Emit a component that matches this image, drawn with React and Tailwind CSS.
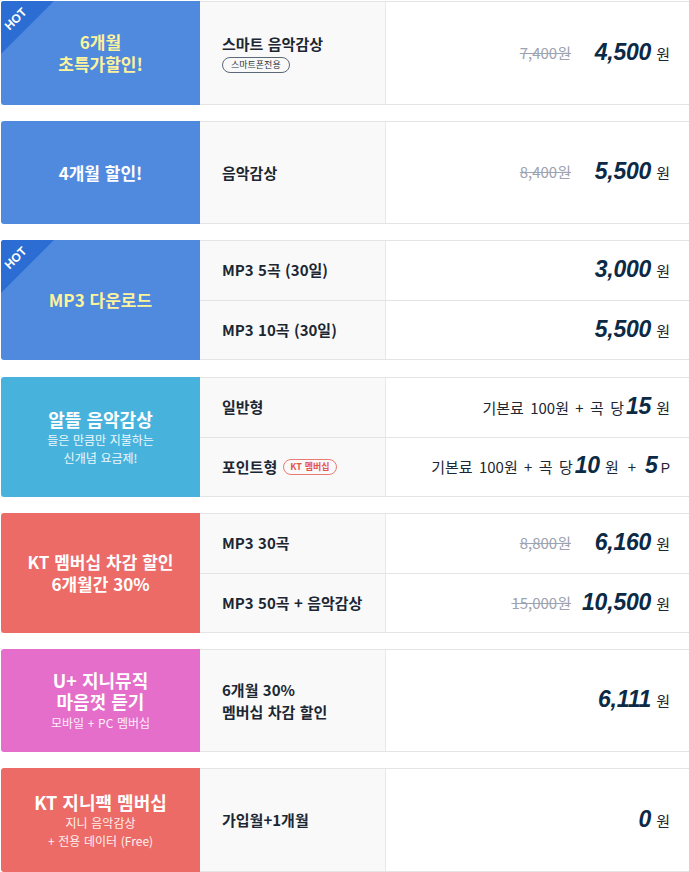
import React from "react";

function Hot() {
  return (
    <div className="absolute left-0 top-0 w-[53px] h-[53px] overflow-hidden rounded-tl-[3px]">
      <svg width="53" height="53" className="absolute inset-0">
        <polygon points="0,0 53,0 0,53" fill="#2b6dd3" />
      </svg>
      <span className="absolute left-[2px] top-[11px] -rotate-45 text-white text-[12px] leading-[14px] font-bold font-['Liberation_Sans',sans-serif]">
        HOT
      </span>
    </div>
  );
}

function Panel({ color, hot, children }) {
  return (
    <div className={`relative ml-px w-[199px] shrink-0 rounded-l-[3px] flex flex-col items-center justify-center text-center [word-spacing:1px] ${color}`}>
      {hot && <Hot />}
      {children}
    </div>
  );
}

function Big({ children }) {
  return (
    <span className="font-['Liberation_Sans',sans-serif] font-bold italic text-[23px] leading-none text-[#0c2a45] tracking-[-0.2px]">
      {children}
    </span>
  );
}

function Won({ children = "원" }) {
  return <span className="ml-[5px] text-[15px] text-[#1c2733]">{children}</span>;
}

function Price({ strike, value }) {
  return (
    <div className="flex items-center justify-end">
      {strike && (
        <span className="text-[15px] text-[#9da3b1] line-through decoration-[#9da3b1]">{strike}</span>
      )}
      <div className={`${strike ? "w-[99px]" : ""} flex items-baseline justify-end`}>
        <Big>{value}</Big>
        <Won />
      </div>
    </div>
  );
}

function Row({ mid, right, first, h }) {
  return (
    <div className={`flex ${h} ${first ? "" : "border-t border-[#e4e4e4]"}`}>
      <div className="w-[186px] shrink-0 bg-[#f9f9f9] border-r border-[#e9e9e9] pl-[22px] flex flex-col justify-center text-[15px] font-bold text-[#1c2733] leading-[22px] [word-spacing:1px]">
        {mid}
      </div>
      <div className="flex-1 pr-[19px] flex items-center justify-end">{right}</div>
    </div>
  );
}

function Card({ h, extra = "", panel, children }) {
  return (
    <div className={`flex ${h} ${extra}`}>
      {panel}
      <div className="flex-1 flex flex-col border-y border-[#e4e4e4]">{children}</div>
    </div>
  );
}

const yellow = "text-[#fdf39c]";

export default function App() {
  return (
    <div className="w-[689px] bg-white pt-px flex flex-col gap-4 font-['Noto_Sans_CJK_KR','Noto_Sans',sans-serif]">
      <Card
        h="h-[104px]"
        panel={
          <Panel color="bg-[#4f8ade]" hot>
            <div className={`${yellow} text-[17px] font-bold leading-[22px]`}>6개월<br />초특가할인!</div>
          </Panel>
        }
      >
        <Row
          first
          h="flex-1"
          mid={
            <>
              <div>스마트 음악감상</div>
              <div className="mt-[2px] self-start rounded-full border border-[#5b6877] px-[8px] text-[9px] leading-[14px] font-normal text-[#2a3440] [word-spacing:0px]">
                스마트폰전용
              </div>
            </>
          }
          right={<Price strike="7,400원" value="4,500" />}
        />
      </Card>

      <Card
        h="h-[103px]"
        panel={
          <Panel color="bg-[#4f8ade]">
            <div className="text-white text-[17px] font-bold leading-[22px]">4개월 할인!</div>
          </Panel>
        }
      >
        <Row first h="flex-1" mid={<div>음악감상</div>} right={<Price strike="8,400원" value="5,500" />} />
      </Card>

      <Card
        h="h-[120px]"
        extra="mb-px"
        panel={
          <Panel color="bg-[#4f8ade]" hot>
            <div className={`${yellow} text-[17px] font-bold leading-[22px]`}>MP3 다운로드</div>
          </Panel>
        }
      >
        <Row first h="flex-1" mid={<div>MP3 5곡 (30일)</div>} right={<Price value="3,000" />} />
        <Row h="flex-1" mid={<div>MP3 10곡 (30일)</div>} right={<Price value="5,500" />} />
      </Card>

      <Card
        h="h-[120px]"
        panel={
          <Panel color="bg-[#47b3dd]">
            <div className="text-white text-[18px] font-bold leading-[22px]">알뜰 음악감상</div>
            <div className="text-white/90 text-[12px] leading-[18px] mt-[1px]">들은 만큼만 지불하는<br />신개념 요금제!</div>
          </Panel>
        }
      >
        <Row
          first
          h="flex-1"
          mid={<div>일반형</div>}
          right={
            <div className="flex items-baseline text-[15px] text-[#1c2733] [word-spacing:3px]">
              <span>기본료 100원 + 곡 당</span>
              <span className="ml-[2px]"><Big>15</Big></span>
              <Won />
            </div>
          }
        />
        <Row
          h="flex-1"
          mid={
            <div className="flex items-center">
              <span>포인트형</span>
              <span className="ml-[6px] rounded-full border border-[#ec7a74] px-[6px] text-[9px] leading-[14px] font-bold text-[#e4544e]">
                KT 멤버십
              </span>
            </div>
          }
          right={
            <div className="flex items-baseline text-[15px] text-[#1c2733] [word-spacing:3px]">
              <span>기본료 100원 + 곡 당</span>
              <span className="ml-[2px]"><Big>10</Big></span>
              <Won />
              <span className="ml-[9px]">+</span>
              <span className="ml-[9px]"><Big>5</Big></span>
              <span className="ml-[3px] text-[14px] font-['Liberation_Sans',sans-serif]">P</span>
            </div>
          }
        />
      </Card>

      <Card
        h="h-[120px]"
        panel={
          <Panel color="bg-[#ec6b66]">
            <div className="text-white text-[17px] font-bold leading-[22px]">KT 멤버십 차감 할인<br />6개월간 30%</div>
          </Panel>
        }
      >
        <Row first h="flex-1" mid={<div>MP3 30곡</div>} right={<Price strike="8,800원" value="6,160" />} />
        <Row h="flex-1" mid={<div>MP3 50곡 + 음악감상</div>} right={<Price strike="15,000원" value="10,500" />} />
      </Card>

      <Card
        h="h-[103px]"
        panel={
          <Panel color="bg-[#e46ec9]">
            <div className="text-white text-[18px] font-bold leading-[21px]">U+ 지니뮤직<br />마음껏 듣기</div>
            <div className="text-white/90 text-[12px] leading-[18px] mt-[2px]">모바일 + PC 멤버십</div>
          </Panel>
        }
      >
        <Row first h="flex-1" mid={<div>6개월 30%<br />멤버십 차감 할인</div>} right={<Price value="6,111" />} />
      </Card>

      <Card
        h="h-[104px]"
        panel={
          <Panel color="bg-[#ec6b66]">
            <div className="text-white text-[18px] font-bold leading-[22px]">KT 지니팩 멤버십</div>
            <div className="text-white/90 text-[12px] leading-[18px] mt-[1px]">지니 음악감상<br />+ 전용 데이터 (Free)</div>
          </Panel>
        }
      >
        <Row first h="flex-1" mid={<div>가입월+1개월</div>} right={<Price value="0" />} />
      </Card>
    </div>
  );
}
